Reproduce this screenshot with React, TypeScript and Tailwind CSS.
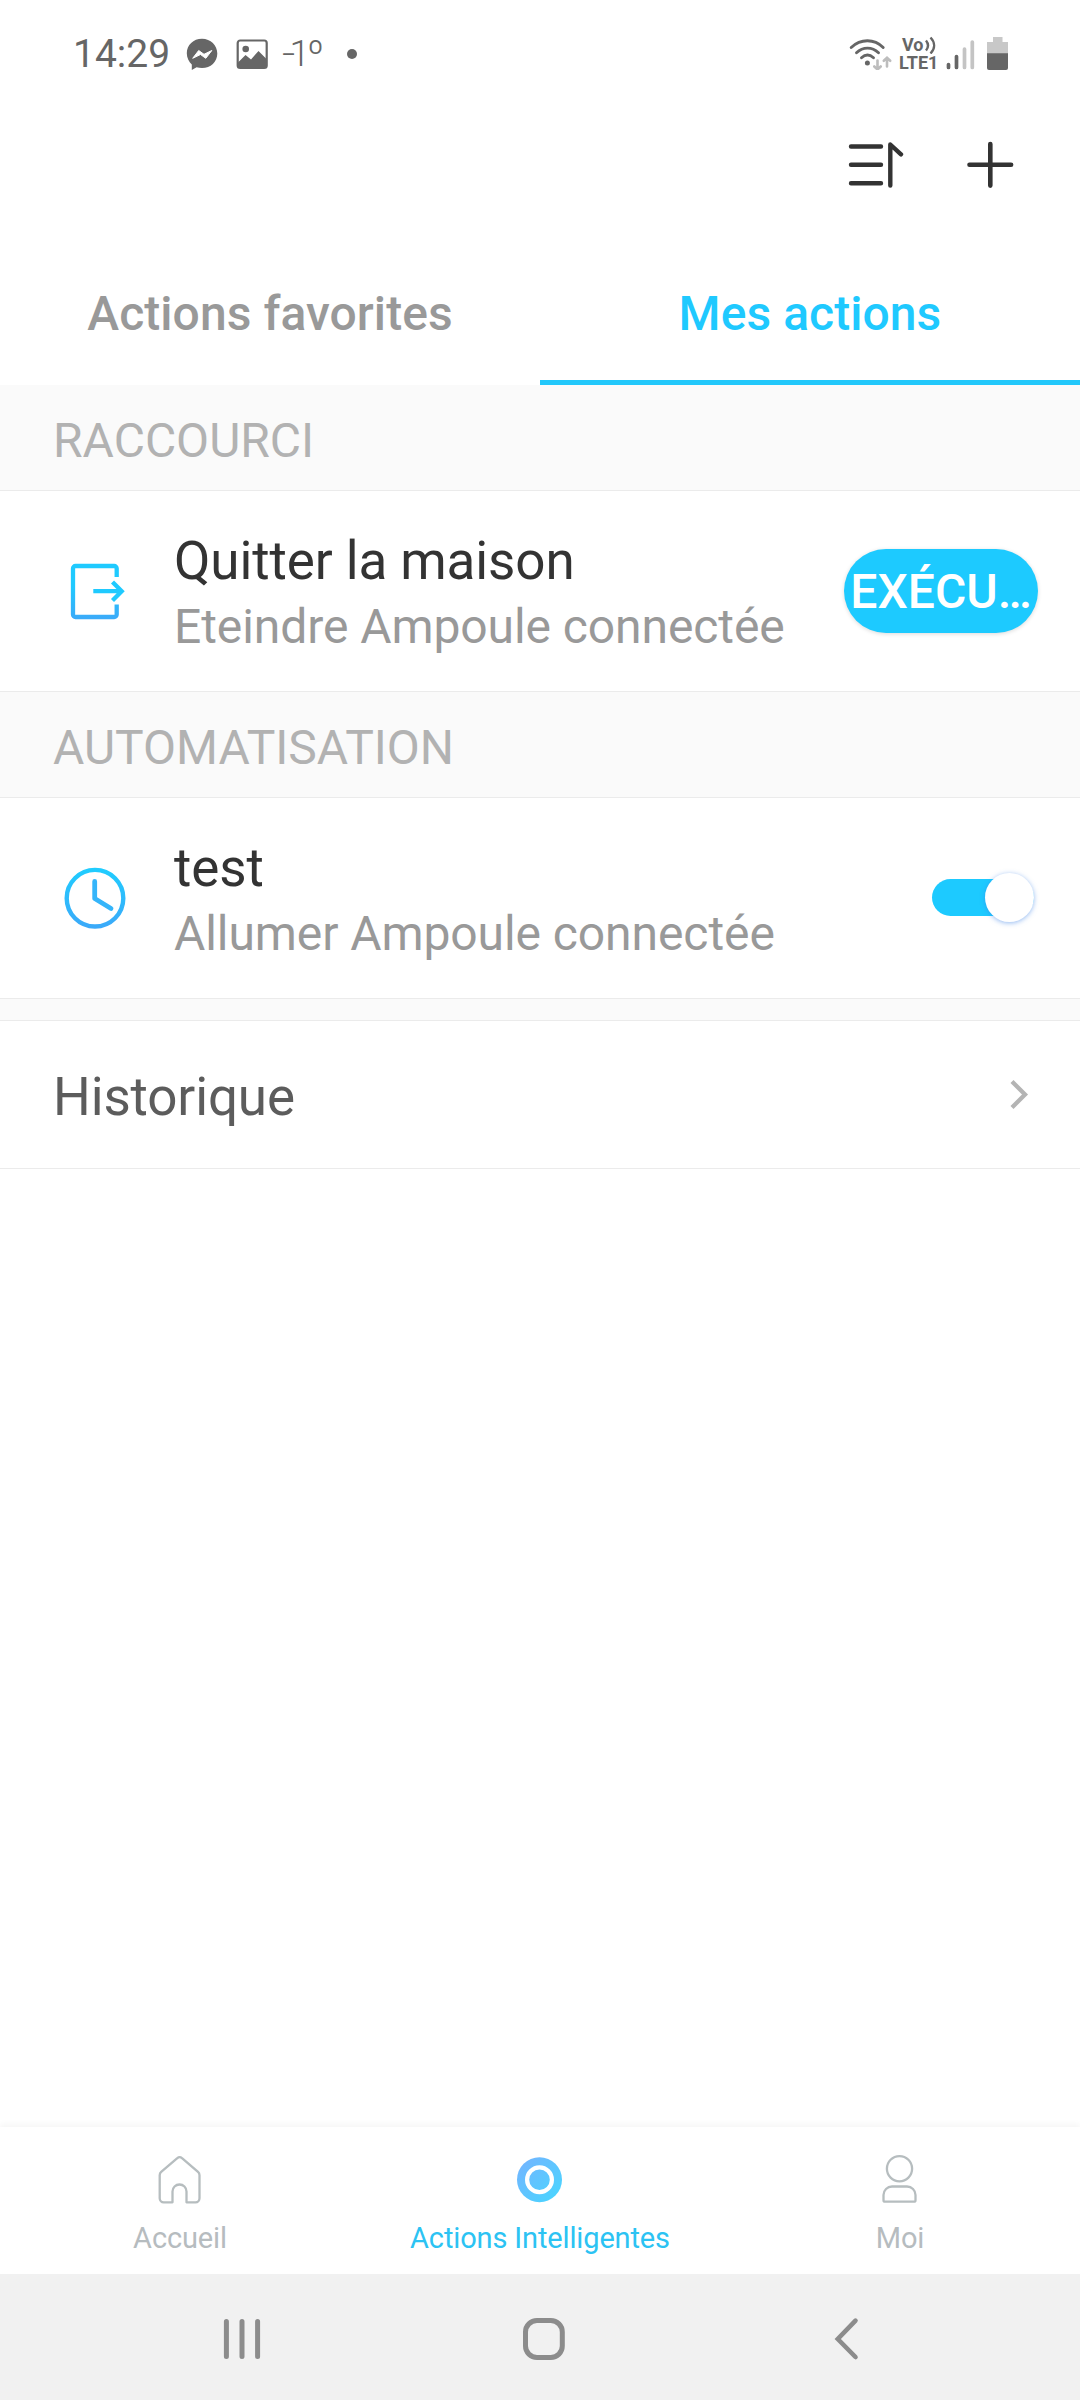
import React, { useState } from 'react';

const TABS = ['Actions favorites', 'Mes actions'];

const StatusBar: React.FC = () => (
    <div className="flex h-[107px] items-start justify-between pl-[73px] pr-[71px] text-[#666666]">
        <div className="flex h-[107px] items-center">
            <span className="w-[113px] text-[39px] leading-[44px]">14:29</span>
            {/* Messenger */}
            <svg className="h-8 w-8" viewBox="0 0 32 32">
                <path d="M16 .7C7.3.7.8 7 .8 15.2c0 4.600 2 8.500 5 11.200V32l4.800-2.700c1.700.5 3.500.8 5.400.8 8.700 0 15.300-6.300 15.300-14.600S24.700.7 16 .7z" fill="#666" />
                <path d="M6.700 20.300l6-7.800 5.300 3.800 7.800-3.800-6 7.800-5.300-3.800z" fill="#fff" stroke="#fff" strokeWidth="1" strokeLinejoin="round" />
            </svg>
            {/* Gallery */}
            <svg className="ml-[18px] h-8 w-8" viewBox="0 0 32 32">
                <rect x="1.700" y="2.500" width="29" height="27.500" rx="2.500" fill="none" stroke="#666" strokeWidth="2.200" />
                <circle cx="9.700" cy="11" r="3.300" fill="#666" />
                <path d="M2 24.500l7.500-7.500 5.500 4.500 7.500-8.500 8.500 8.500V30H2z" fill="#666" />
            </svg>
            <div className="ml-[14px] flex h-[44px] w-[65px] text-[37px] font-light leading-[44px] tracking-[-3px]">
                <span className="origin-left scale-x-[1.250]">-</span>
                <span>1º</span>
            </div>
            <span className="h-[10px] w-[10px] rounded-full bg-[#666666]" />
        </div>
        <div className="flex h-[107px] items-center">
            <svg className="h-8 w-11" viewBox="0 0 44 32" fill="none" strokeLinecap="round">
                <g stroke="#666" strokeWidth="2.900">
                    <path d="M2.200 9.500c9.500-9 23-9 32 0" />
                    <path d="M7.500 14.800c6.500-6.200 15.500-6.200 22 0" />
                    <path d="M12.500 19.800c3.800-3.500 8.200-3.500 12 0" />
                </g>
                <circle cx="18.400" cy="25" r="2.500" fill="#666" />
                <g stroke="#bdbdbd" strokeWidth="2.600">
                    <path d="M28.500 22.500v9M25.300 28.500l3.200 3 3.200-3" />
                    <path d="M38 28.500v-8.500M34.800 22.800l3.200-3 3.200 3" />
                </g>
            </svg>
            <div className="ml-[6px] flex w-[42px] flex-col text-[18px] font-bold leading-[18px]">
                <span className="flex pl-[3px]">
                    Vo
                    <svg className="ml-px h-[18px] w-[12px]" viewBox="0 0 12 18" fill="none" stroke="#666" strokeWidth="2.400">
                        <path d="M1 4.500c2.600 3.200 2.600 6.800 0 10M5.500 1.500c4.800 5 4.800 11 0 16" />
                    </svg>
                </span>
                <span>LTE1</span>
            </div>
            <svg className="ml-1 h-8 w-[30px]" viewBox="0 0 30 32" strokeWidth="3.700" strokeLinecap="round">
                <path d="M3.500 26.500v3M11.500 18.500v11" stroke="#666" />
                <path d="M19.500 11v18.500M27.300 4v25.500" stroke="#c4c4c4" />
            </svg>
            <svg className="ml-3 h-[33px] w-[22px]" viewBox="0 0 22 33">
                <path d="M6 0h9.500v5H21v12H0V5h6z" fill="#c8c8c8" />
                <path d="M0 16.300h21V31a2 2 0 0 1-2 2H2a2 2 0 0 1-2-2z" fill="#666" />
            </svg>
        </div>
    </div>
);

const LeaveIcon = () => (
    <svg className="h-16 w-16" viewBox="0 0 64 64" fill="none" strokeWidth="4.300">
        <defs>
            <linearGradient id="leave" gradientUnits="userSpaceOnUse" x1="0" y1="5" x2="0" y2="59">
                <stop offset="0.400" stopColor="#1fcaff" />
                <stop offset="1" stopColor="#3aabf9" />
            </linearGradient>
        </defs>
        <path stroke="url(#leave)" d="M53.700 18V9.500a2.500 2.500 0 0 0-2.500-2.500H12.500A2.500 2.500 0 0 0 10 9.500v46a2.500 2.500 0 0 0 2.500 2.500h38.700a2.500 2.500 0 0 0 2.500-2.500V45.500" />
        <path stroke="#1fcaff" d="M30.300 32.200H59M49.500 23l9.200 9.200-9.200 9.200" />
    </svg>
);

const ClockIcon = () => (
    <svg className="h-16 w-16" viewBox="0 0 64 64" fill="none" stroke="url(#clock)" strokeWidth="4.400">
        <defs>
            <linearGradient id="clock" gradientUnits="userSpaceOnUse" x1="0" y1="2" x2="0" y2="62">
                <stop offset="0" stopColor="#1fcdff" />
                <stop offset="1" stopColor="#3ba9f9" />
            </linearGradient>
        </defs>
        <circle cx="32" cy="32.200" r="28.300" />
        <path stroke="#35b5fa" strokeWidth="4.800" strokeLinecap="round" strokeLinejoin="round" d="M31.700 15.500v17l16.300 10" />
    </svg>
);

const SectionTitle: React.FC<{ label: string }> = ({ label }) => (
    <div className="h-[105px] bg-[#fafafa] pl-[53px] pt-[28px] text-[48px] leading-[56px] text-[#b2b2b2]">{label}</div>
);

interface ActionRowProps {
    icon: React.ReactNode;
    title: string;
    subtitle: string;
    children: React.ReactNode;
}

const ActionRow: React.FC<ActionRowProps> = ({ icon, title, subtitle, children }) => (
    <div className="flex h-[202px] items-center border-y border-[#ebebeb] pl-[63px]">
        {icon}
        <div className="ml-[47px] flex flex-1 flex-col whitespace-nowrap pt-[2px]">
            <span className="text-[53px] leading-[62px] tracking-[-0.100px] text-[#333333]">{title}</span>
            <span className="mt-[7px] text-[48px] leading-[56px] tracking-[-0.080px] text-[#999999]">{subtitle}</span>
        </div>
        {children}
    </div>
);

const NAV_ITEMS = [
    {
        label: 'Accueil',
        color: 'text-[#b6bcbf]',
        icon: (
            <path fill="none" stroke="#b6bdbf" strokeWidth="2.300" strokeLinejoin="round" d="M17.500 49.300V38.500a7 7 0 0 1 14 0v10.800h9a4 4 0 0 0 4-4V22.200a4.500 4.500 0 0 0-1.500-3.300L27 5.200a3.500 3.500 0 0 0-4.700 0L6.200 18.900a4.500 4.500 0 0 0-1.500 3.300v23.100a4 4 0 0 0 4 4z" />
        ),
    },
    {
        label: 'Actions Intelligentes',
        color: 'text-[#2cc3f3]',
        icon: (
            <>
                <defs>
                    <linearGradient id="smart" x1="0" y1="0" x2="1" y2="1">
                        <stop offset="0.100" stopColor="#72b6ff" />
                        <stop offset="0.900" stopColor="#4bd4ff" />
                    </linearGradient>
                </defs>
                <circle cx="24.500" cy="26.700" r="22.500" fill="url(#smart)" />
                <circle cx="24.500" cy="26.700" r="12.400" fill="none" stroke="#fff" strokeWidth="4.200" />
            </>
        ),
    },
    {
        label: 'Moi',
        color: 'text-[#b6bcbf]',
        icon: (
            <g fill="none" stroke="#b6bdbf" strokeWidth="2.300">
                <circle cx="24.500" cy="15.700" r="12.600" />
                <path d="M8.500 47.200V42a8.500 8.500 0 0 1 8.500-8.500h15a8.500 8.500 0 0 1 8.500 8.500v5.200a1.500 1.500 0 0 1-1.500 1.500H10a1.500 1.500 0 0 1-1.500-1.500z" />
            </g>
        ),
    },
];

const SystemNav: React.FC = () => (
    <div className="flex h-[126px] items-center justify-between bg-[#f1f1f1] pl-[218px] pr-[210px]">
        <svg className="h-12 w-12" viewBox="0 0 48 48" stroke="#8c8c8c" strokeWidth="5" strokeLinecap="round">
            <path d="M8.400 8.500v35M24 8.500v35M39.600 8.500v35" />
        </svg>
        <svg className="h-12 w-12" viewBox="0 0 48 48" fill="none" stroke="#8c8c8c" strokeWidth="5">
            <rect x="5.500" y="7.500" width="36.800" height="37" rx="11.500" />
        </svg>
        <svg className="h-12 w-12" viewBox="0 0 48 48" fill="none" stroke="#8c8c8c" strokeWidth="4.600" strokeLinecap="round">
            <path d="M33.500 7.700L15.800 26l17.700 18" />
        </svg>
    </div>
);

export default function App() {
    const [activeTab, setActiveTab] = useState('Mes actions');
    const [enabled, setEnabled] = useState(true);

    return (
        <div className="flex h-[2400px] w-[1080px] flex-col bg-white font-['Roboto',sans-serif]">
            <StatusBar />

            {/* Toolbar */}
            <div className="flex h-[115px] items-center justify-end gap-[61px] pr-[65px]">
                <svg className="h-14 w-14" viewBox="0 0 56 56" fill="none" stroke="#333" strokeWidth="4.400" strokeLinecap="round" strokeLinejoin="round">
                    <path d="M3 9.500h30M3 27.800h30M3 46.200h30M42.300 48.500V7.500l10.700 9.800" />
                </svg>
                <svg className="h-[50px] w-[50px]" viewBox="0 0 50 50" stroke="#333" strokeWidth="4.600" strokeLinecap="round">
                    <path d="M25.300 4v41.600M4.500 24.800h41.600" />
                </svg>
            </div>

            {/* Tabs */}
            <div className="flex h-[163px]">
                {TABS.map(tab => (
                    <button
                        key={tab}
                        onClick={() => setActiveTab(tab)}
                        className={`flex-1 border-b-[5px] pt-[25px] text-[48px] font-medium leading-[56px] tracking-[0.060px] ${
                            tab === activeTab ? 'border-[#22c8fb] text-[#1fc9ff]' : 'border-transparent text-[#999999]'
                        }`}
                    >
                        {tab}
                    </button>
                ))}
            </div>

            <SectionTitle label="RACCOURCI" />
            <ActionRow icon={<LeaveIcon />} title="Quitter la maison" subtitle="Eteindre Ampoule connectée">
                <button className="mr-[42px] h-[84px] w-[194px] rounded-full bg-[#1dcaff] text-[48px] font-medium leading-[86px] text-white shadow-[0_1px_4px_rgba(0,0,0,0.15)]">
                    EXÉCU…
                </button>
            </ActionRow>

            <SectionTitle label="AUTOMATISATION" />
            <ActionRow icon={<ClockIcon />} title="test" subtitle="Allumer Ampoule connectée">
                <button onClick={() => setEnabled(!enabled)} className="mb-[2px] mr-[46px] flex h-[50px] w-[102px] items-center">
                    <span className={`flex h-[37px] w-full items-center rounded-full ${enabled ? 'justify-end bg-[#1dcaff]' : 'bg-gray-300'}`}>
                        <span className="h-[49px] w-[49px] shrink-0 rounded-full bg-white shadow-[0_1px_5px_rgba(60,130,230,0.55)]" />
                    </span>
                </button>
            </ActionRow>

            <div className="h-[21px] bg-[#fafafa]" />
            <div className="flex h-[149px] items-center justify-between border-y border-[#ebebeb] pl-[53px] pr-[50px]">
                <span className="pt-[4px] text-[53px] leading-[64px] tracking-[-0.150px] text-[#5c5c5c]">Historique</span>
                <svg className="h-8 w-5" viewBox="0 0 20 32" fill="none" stroke="#b4b4b4" strokeWidth="4.300">
                    <path d="M2 2.500l13 13L2 28.500" />
                </svg>
            </div>

            <div className="flex-1" />

            {/* Bottom navigation */}
            <div className="flex h-[147px] bg-white shadow-[0_-3px_6px_rgba(0,0,0,0.04)]">
                {NAV_ITEMS.map(item => (
                    <div key={item.label} className="flex flex-1 flex-col items-center pt-[26px]">
                        <svg className="mr-px h-[52px] w-[49px]" viewBox="0 0 49 52">
                            {item.icon}
                        </svg>
                        <span className={`mt-[15px] whitespace-nowrap text-[29px] leading-[36px] tracking-[-0.140px] ${item.color}`}>{item.label}</span>
                    </div>
                ))}
            </div>
            <SystemNav />
        </div>
    );
}
